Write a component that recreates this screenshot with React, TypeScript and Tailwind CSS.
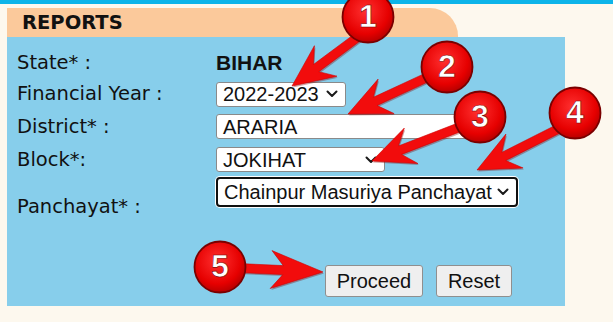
import React from "react";

const label = "font-['DejaVu_Sans',Verdana,sans-serif] text-[19.5px] text-[#111]";
const ctl = "font-['Liberation_Sans',Arial,sans-serif] text-[20px] text-[#111]";

function Chevron() {
  return (
    <svg width="12" height="8" viewBox="0 0 12 8" className="shrink-0">
      <path d="M1.5 1.5 L6 6 L10.5 1.5" fill="none" stroke="#1a1a1a" strokeWidth="2" strokeLinecap="round" strokeLinejoin="round" />
    </svg>
  );
}

function FakeSelect({ value, width, focused }: { value: string; width: string; focused?: boolean }) {
  return (
    <div
      className={
        "flex items-center justify-between bg-white pl-[6px] pr-[7px] rounded-[3px] " +
        width +
        " " +
        (focused
          ? "h-[30px] border-2 border-[#101010] rounded-[4px] shadow-[0_0_0_1px_#ffffff]"
          : "h-[25px] border border-[#8a8a8a]")
      }
    >
      <span className={ctl + " leading-none whitespace-nowrap"}>{value}</span>
      <Chevron />
    </div>
  );
}

type Pt = [number, number];

function arrowPoints(t: Pt, p: Pt, L: number, W: number, s: number, notch: number) {
  const dx = p[0] - t[0];
  const dy = p[1] - t[1];
  const len = Math.hypot(dx, dy);
  const ux = dx / len;
  const uy = dy / len;
  const nx = -uy;
  const ny = ux;
  const bx = p[0] - ux * L;
  const by = p[1] - uy * L;
  const jx = bx + ux * notch;
  const jy = by + uy * notch;
  const pts: Pt[] = [
    [t[0] + (nx * s) / 2, t[1] + (ny * s) / 2],
    [jx + (nx * s) / 2, jy + (ny * s) / 2],
    [bx + nx * W, by + ny * W],
    [p[0], p[1]],
    [bx - nx * W, by - ny * W],
    [jx - (nx * s) / 2, jy - (ny * s) / 2],
    [t[0] - (nx * s) / 2, t[1] - (ny * s) / 2],
  ];
  return pts.map((q) => q[0].toFixed(1) + "," + q[1].toFixed(1)).join(" ");
}

const arrows: { t: Pt; p: Pt; L: number; W: number }[] = [
  { t: [362, 34], p: [292, 86], L: 42, W: 19 },
  { t: [430, 76], p: [348, 114], L: 42, W: 19 },
  { t: [460, 127], p: [372, 161], L: 42, W: 19 },
  { t: [560, 128], p: [477, 170], L: 42, W: 19 },
  { t: [238, 268], p: [323, 272], L: 52, W: 19 },
];

const circles: { cx: number; cy: number; n: string }[] = [
  { cx: 368, cy: 17, n: "1" },
  { cx: 447, cy: 67, n: "2" },
  { cx: 480, cy: 117, n: "3" },
  { cx: 575, cy: 113, n: "4" },
  { cx: 220, cy: 267, n: "5" },
];

function Annotations() {
  return (
    <svg className="absolute left-0 top-0 pointer-events-none" width="613" height="322" viewBox="0 0 613 322">
      <defs>
        <radialGradient id="cg" cx="45%" cy="38%" r="65%">
          <stop offset="0%" stopColor="#ff3030" />
          <stop offset="70%" stopColor="#e60000" />
          <stop offset="100%" stopColor="#b00000" />
        </radialGradient>
      </defs>
      {arrows.map((a, i) => (
        <g key={i}>
          <polygon points={arrowPoints([a.t[0] + 1, a.t[1] + 1.5], [a.p[0] + 1, a.p[1] + 1.5], a.L, a.W, 9, 12)} fill="#7a0000" opacity="0.35" />
          <polygon points={arrowPoints(a.t, a.p, a.L, a.W, 9, 12)} fill="#f20c0c" stroke="#d00000" strokeWidth="0.6" strokeLinejoin="round" />
        </g>
      ))}
      {circles.map((c, i) => (
        <g key={i}>
          <circle cx={c.cx} cy={c.cy} r="25.5" fill="url(#cg)" stroke="#7a0000" strokeWidth="1.8" />
          <text
            x={c.cx}
            y={c.cy - 1}
            textAnchor="middle"
            dominantBaseline="central"
            fontFamily="'Liberation Sans', Arial, sans-serif"
            fontWeight="bold"
            fontSize="32"
            fill="#ffffff"
            stroke="#7a0000"
            strokeWidth="0.6"
          >
            {c.n}
          </text>
        </g>
      ))}
    </svg>
  );
}

export default function App() {
  return (
    <div className="relative w-[613px] h-[322px] overflow-hidden bg-[#fdf8ee]">
      <div className="h-[4px] bg-[#0db4e9]" />
      <div className="ml-[7px] mt-[4px] w-[451px] h-[29px] bg-[#fbc99b] rounded-tr-[28px] pl-[15px] flex items-center">
        <span className="font-['DejaVu_Sans',Verdana,sans-serif] font-bold text-[19.5px] text-[#111] leading-none">REPORTS</span>
      </div>
      <div className="ml-[7px] w-[558px] h-[269px] bg-[#87ceeb] pl-[10px] pt-[10px] flex flex-col">
        <div className="flex items-center h-[31px]">
          <div className={label + " w-[199px]"}>State* :</div>
          <div className="font-['Liberation_Sans',Arial,sans-serif] font-bold text-[21px] text-[#111]">BIHAR</div>
        </div>
        <div className="flex items-center h-[32px]">
          <div className={label + " w-[199px]"}>Financial Year :</div>
          <FakeSelect value="2022-2023" width="w-[130px]" />
        </div>
        <div className="flex items-center h-[33px]">
          <div className={label + " w-[199px]"}>District* :</div>
          <div className="w-[252px] h-[25px] bg-white border border-[#8a8a8a] rounded-[3px] pl-[6px] flex items-center">
            <span className={ctl + " leading-none"}>ARARIA</span>
          </div>
        </div>
        <div className="flex items-center h-[33px]">
          <div className={label + " w-[199px]"}>Block*:</div>
          <FakeSelect value="JOKIHAT" width="w-[169px]" />
        </div>
        <div className="flex items-start h-[42px]">
          <div className={label + " w-[199px] mt-[20px] leading-[22px]"}>Panchayat* :</div>
          <div className="mt-[1px]">
            <FakeSelect value="Chainpur Masuriya Panchayat" width="w-[302px]" focused />
          </div>
        </div>
        <div className="flex gap-[13px] ml-[308px] mt-[47px]">
          <button className={ctl + " w-[98px] h-[32px] bg-[#efefef] border border-[#8f8f8f] rounded-[3px] leading-none"}>Proceed</button>
          <button className={ctl + " w-[76px] h-[32px] bg-[#efefef] border border-[#8f8f8f] rounded-[3px] leading-none"}>Reset</button>
        </div>
      </div>
      <Annotations />
    </div>
  );
}
